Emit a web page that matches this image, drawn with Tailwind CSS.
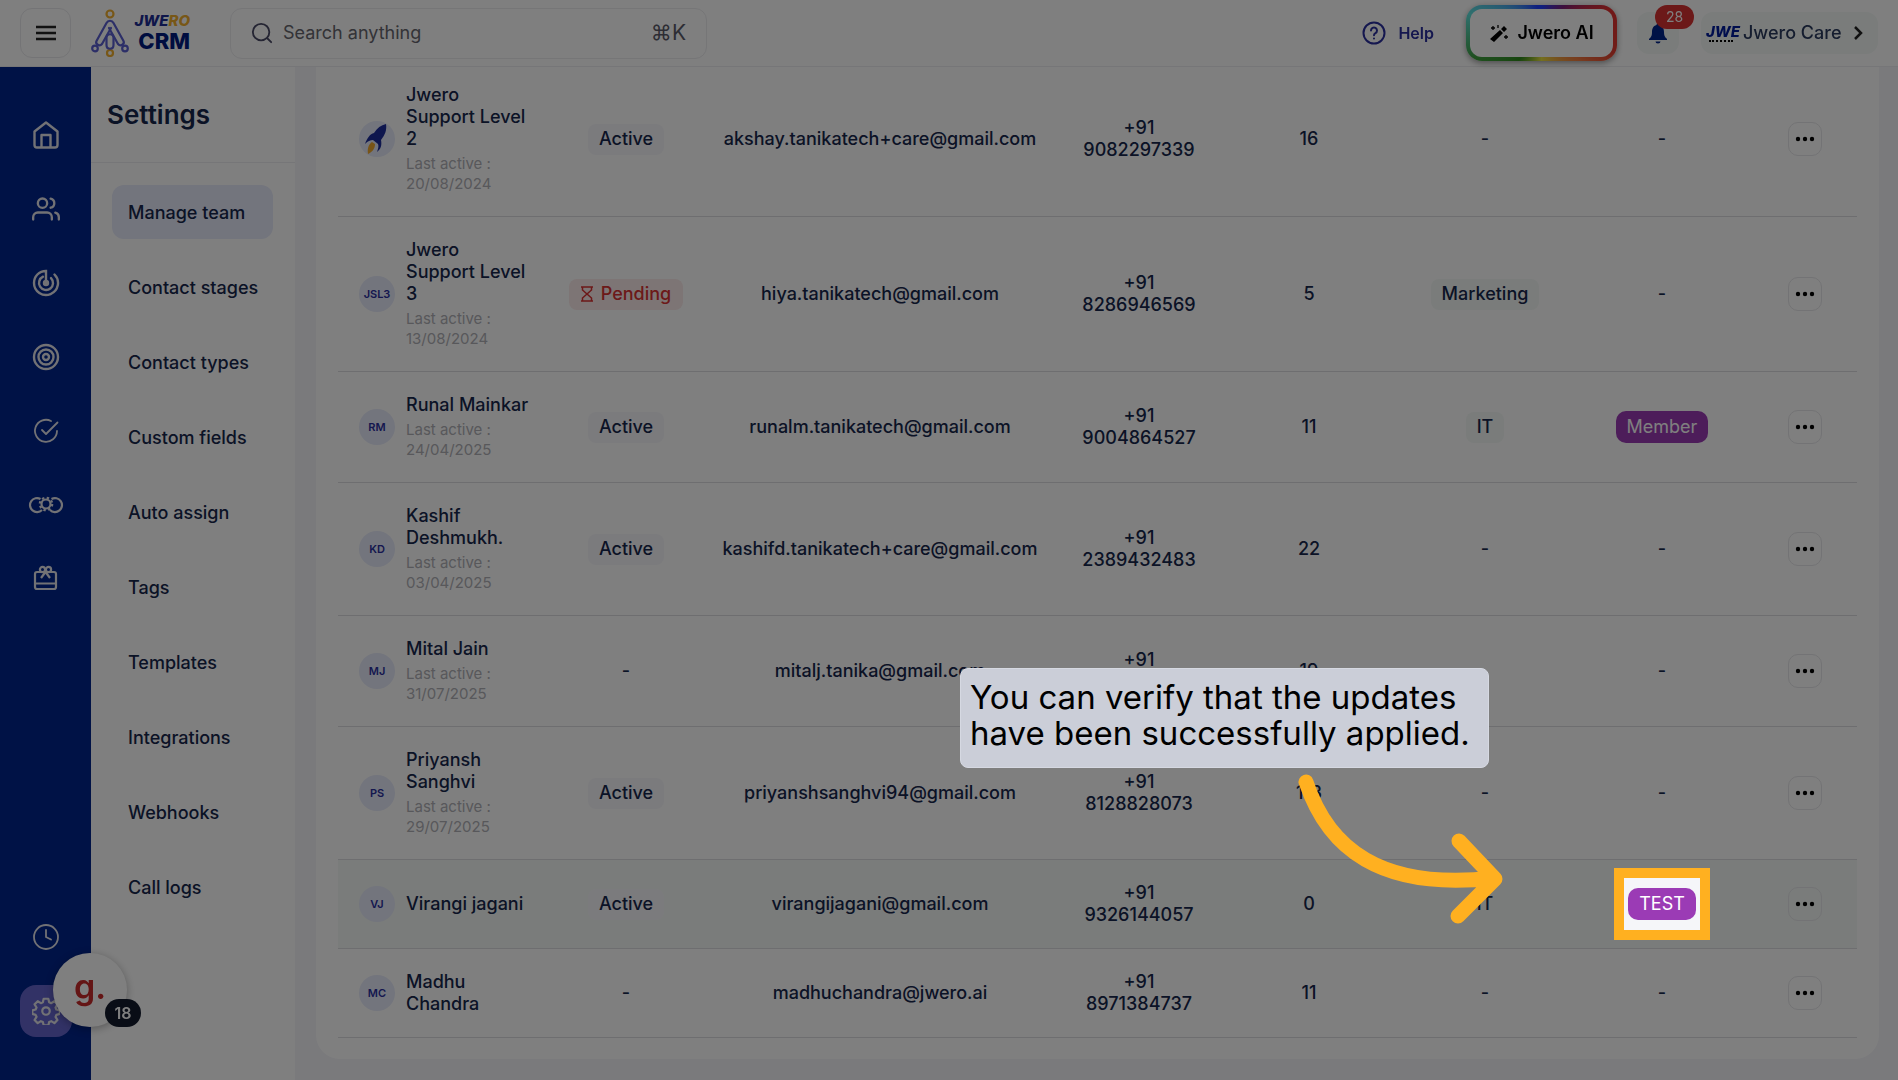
<!DOCTYPE html>
<html lang="en">
<head>
    <meta charset="UTF-8">
    <meta name="viewport" content="width=device-width, initial-scale=1.0">
    <title>Jwero CRM - Settings</title>
    <script src="https://cdn.jsdelivr.net/npm/@tailwindcss/browser@4"></script>
</head>
<body class="min-h-screen overflow-hidden bg-[#f4f4f9] font-['Inter',sans-serif] text-[#16264c]">

    <!-- Header -->
    <header class="fixed inset-x-0 top-0 z-10 flex h-[67px] items-center border-b border-[#ededf0] bg-white pl-5 pr-5">
        <button aria-label="Menu" class="flex h-[50px] w-[51px] items-center justify-center rounded-xl border border-[#e9e9ec]">
            <svg class="size-6" viewBox="0 0 24 24" fill="none" stroke="#222" stroke-width="2.5"><path d="M2 6h20M2 12h20M2 18h20"/></svg>
        </button>

        <a href="#" class="ml-5 flex w-[99px] items-center justify-between">
            <svg class="h-12 w-[38px]" viewBox="0 0 38 48" fill="none" stroke-width="2.2">
                <g stroke="#f0ae2e"><circle cx="19" cy="5" r="3.5"/><circle cx="19" cy="44" r="3"/></g>
                <g stroke="#5a5fd0" stroke-linejoin="round" stroke-linecap="round">
                    <circle cx="4" cy="39.500" r="2.800"/><circle cx="34" cy="39.500" r="2.800"/>
                    <path d="M15.500 14 5.500 32c-1.500 3 3 6 5.500 3l9-16M22.500 14l10 18c1.500 3-3 6-5.500 3l-9-16M15.500 14c1.500-3 5.500-3 7 0"/>
                    <path d="M15.500 29c0-5 7-5 7 0v7c0 5-7 5-7 0z"/>
                </g>
            </svg>
            <span class="flex flex-col items-end font-extrabold">
                <span class="text-[15px] leading-4 italic text-[#1c2c94]">JWE<span class="text-[#f0ae2e]">RO</span></span>
                <span class="text-[22px] leading-6 text-[#001a80]">CRM</span>
            </span>
        </a>

        <label class="ml-10 flex h-[51px] w-[477px] items-center rounded-xl border border-[#ececef] px-5">
            <svg class="size-[22px]" viewBox="0 0 24 24" fill="none" stroke="#4a4a66" stroke-width="2" stroke-linecap="round"><circle cx="11" cy="11" r="9"/><path d="m18 18 4 4"/></svg>
            <input type="text" aria-label="Search anything" placeholder="Search anything" class="ml-[10px] min-w-0 flex-1 text-lg outline-none placeholder:text-[#66666e]">
            <span class="text-[21px] text-[#5a5a68]">⌘K</span>
        </label>

        <div class="ml-auto flex items-center">
            <a href="#" class="flex items-center gap-3 text-base font-semibold text-[#2a2f9e]">
                <svg class="size-6" viewBox="0 0 24 24" fill="none" stroke="#2a2f9e" stroke-width="2" stroke-linecap="round"><circle cx="12" cy="12" r="10.500"/><path d="M9 9.500a3 3 0 1 1 4.500 2.600Q12 13 12 14.200M12 17.500v.1"/></svg>
                Help
            </a>
            <div class="ml-8 rounded-2xl bg-[conic-gradient(#1f3fff,#7a1f7a_40deg,#e03030_70deg,#e03c30_105deg,#f07a40_125deg,#e8e040_180deg,#2f8a1c_220deg,#3f9f3f_250deg,#5fe0dc_285deg,#1f3fff_350deg)] p-1 shadow-[0_2px_6px_rgba(0,0,0,0.4)]">
                <button class="flex h-12 w-[143px] items-center justify-center gap-2 rounded-xl bg-white text-lg font-semibold text-black">
                    <svg class="size-5" viewBox="0 0 20 20"><path d="M1 16 11 7l3 3-9 9zM12 6l3-3 3 3-3 3z" fill="#000"/><path d="M4 3v4M2 5h4M9 2v3M17 12v4M15 14h4" stroke="#000" stroke-width="1.300"/></svg>
                    Jwero AI
                </button>
            </div>
            <button aria-label="Notifications" class="relative ml-5 flex size-[42px] items-center justify-center rounded-xl bg-[#f4f9f6]">
                <svg class="size-6" viewBox="0 0 24 24" fill="#00248c"><path d="M12 2a2 2 0 0 1 1.500 2C17 5 18 8 18 11c0 4 1 5 3 7v1H3v-1c2-2 3-3 3-7 0-3 1-6 4.500-7A2 2 0 0 1 12 2zM9.500 20.500h5a2.500 2 0 0 1-5 0z"/></svg>
                <span class="absolute -top-[7px] left-[18px] flex h-6 w-[39px] items-center justify-center rounded-full bg-[#d93232] text-sm text-white">28</span>
            </button>
            <button class="ml-[22px] flex h-[42px] w-[177px] items-center rounded-xl bg-[#f4f9f6] pl-1 text-lg font-medium text-[#2a3a5e]">
                <span class="flex w-9 flex-col justify-center">
                    <span class="text-[15px] leading-4 font-extrabold italic text-[#001a9c]">JWE</span>
                    <span class="ml-1 w-6 border-b-2 border-dotted border-black"></span>
                </span>
                <span class="ml-[2px] whitespace-nowrap">Jwero Care</span>
                <svg class="ml-auto mr-[10px] size-5" viewBox="0 0 20 20" fill="none" stroke="#222" stroke-width="2.500"><path d="m7 4 6 6-6 6"/></svg>
            </button>
        </div>
    </header>

    <div class="flex min-h-screen">

        <!-- Icon Sidebar -->
        <nav class="flex w-[91px] shrink-0 flex-col items-center justify-between bg-[#00248c] pt-[109px] pb-[43px] text-[#e4e4ea]">
            <div class="flex flex-col gap-[22px]">
                <a href="#" aria-label="Home" class="flex size-[52px] items-center justify-center">
                    <svg class="size-7" viewBox="0 0 28 28" fill="none" stroke="currentColor" stroke-width="2.400" stroke-linejoin="round"><path d="M2.500 10.500 14 1.500l11.500 9V24a2.500 2.500 0 0 1-2.500 2.500H5A2.500 2.500 0 0 1 2.500 24zM9.500 26V14h9v12"/></svg>
                </a>
                <a href="#" aria-label="Contacts" class="flex size-[52px] items-center justify-center">
                    <svg class="size-7" viewBox="0 0 24 24" fill="none" stroke="currentColor" stroke-width="2" stroke-linecap="round"><circle cx="9" cy="7" r="4"/><path d="M1 21v-2a4 4 0 0 1 4-4h8a4 4 0 0 1 4 4v2M16 3.100a4 4 0 0 1 0 7.800M23 21v-2a4 4 0 0 0-3-3.900"/></svg>
                </a>
                <a href="#" aria-label="Leads" class="flex size-[52px] items-center justify-center">
                    <svg class="size-7" viewBox="0 0 28 28" fill="none" stroke="currentColor" stroke-width="2.400" stroke-linecap="round"><path d="M14 14V2C7 2 2 7.400 2 14a12 12 0 1 0 20.500-8.500"/><path d="M11 7.700a7 7 0 1 0 8 1.400"/><circle cx="14" cy="14" r="2"/></svg>
                </a>
                <a href="#" aria-label="Targets" class="flex size-[52px] items-center justify-center">
                    <svg class="size-7" viewBox="0 0 28 28" fill="none" stroke="currentColor" stroke-width="2.400"><circle cx="14" cy="14" r="12"/><circle cx="14" cy="14" r="7.500"/><circle cx="14" cy="14" r="3"/></svg>
                </a>
                <a href="#" aria-label="Tasks" class="flex size-[52px] items-center justify-center">
                    <svg class="size-7" viewBox="0 0 28 28" fill="none" stroke="currentColor" stroke-width="1.800" stroke-linecap="round" stroke-linejoin="round"><path d="M19 4a11 11 0 1 0 6 10M10 13l4 4L25.500 5.500"/></svg>
                </a>
                <a href="#" aria-label="Automation" class="flex size-[52px] items-center justify-center">
                    <svg class="h-5 w-9" viewBox="0 0 36 20" fill="none" stroke="currentColor" stroke-width="2.200"><path d="M12.500 4a7 7 0 1 0 1.500 11M23.500 4a7 7 0 1 1-1.500 11"/><circle cx="18" cy="9" r="4.500"/><circle cx="18" cy="9" r="6.200" stroke-dasharray="2.400 2.470"/></svg>
                </a>
                <a href="#" aria-label="Rewards" class="flex size-[52px] items-center justify-center">
                    <svg class="size-7" viewBox="0 0 28 28" fill="none" stroke="currentColor" stroke-width="2.200" stroke-linejoin="round"><rect x="3" y="7" width="21" height="17" rx="2"/><path d="M3 18.500h21M13.500 7 9 13M13.500 7l4.500 6"/><circle cx="10.500" cy="4.500" r="2.600"/><circle cx="16.500" cy="4.500" r="2.600"/></svg>
                </a>
            </div>
            <div class="flex flex-col gap-[22px]">
                <a href="#" aria-label="History" class="flex size-[52px] items-center justify-center">
                    <svg class="size-7" viewBox="0 0 28 28" fill="none" stroke="currentColor" stroke-width="1.800" stroke-linecap="round"><circle cx="14" cy="14" r="12"/><path d="M14 7v7l5 2.500"/></svg>
                </a>
                <a href="#" aria-label="Settings" class="flex size-[52px] items-center justify-center rounded-2xl bg-[#6464cc]">
                    <svg class="size-7" viewBox="0 0 24 24" fill="none" stroke="currentColor" stroke-width="1.900" stroke-linejoin="round"><circle cx="12" cy="12" r="3.200"/><path d="M10 1.500h4l.7 3 1.800.8 2.700-1.700 2.600 2.700-1.600 2.700.7 1.700 3 .8v3l-3 .8-.7 1.700 1.600 2.700-2.600 2.700-2.700-1.700-1.800.8-.7 2.800h-4l-.7-2.800-1.700-.8-2.700 1.700-2.700-2.700 1.700-2.700-.8-1.700-2.800-.8v-3l2.800-.8.8-1.700-1.700-2.700 2.700-2.700 2.700 1.700 1.700-.8z"/></svg>
                </a>
            </div>
        </nav>

        <!-- Settings Menu -->
        <aside class="w-[204px] shrink-0 bg-white pt-[67px]">
            <h1 class="flex h-24 items-center border-b border-[#ededf0] pl-4 text-[26px] font-semibold">Settings</h1>
            <nav class="flex flex-col gap-[21px] pt-[22px] pr-[22px] pl-[21px] text-lg font-medium">
                <a href="#" class="flex h-[54px] items-center rounded-xl bg-[#e6eafa] pt-[2px] pl-4">Manage team</a>
                <a href="#" class="flex h-[54px] items-center pt-[2px] pl-4 whitespace-nowrap">Contact stages</a>
                <a href="#" class="flex h-[54px] items-center pt-[2px] pl-4">Contact types</a>
                <a href="#" class="flex h-[54px] items-center pt-[2px] pl-4">Custom fields</a>
                <a href="#" class="flex h-[54px] items-center pt-[2px] pl-4">Auto assign</a>
                <a href="#" class="flex h-[54px] items-center pt-[2px] pl-4">Tags</a>
                <a href="#" class="flex h-[54px] items-center pt-[2px] pl-4">Templates</a>
                <a href="#" class="flex h-[54px] items-center pt-[2px] pl-4">Integrations</a>
                <a href="#" class="flex h-[54px] items-center pt-[2px] pl-4">Webhooks</a>
                <a href="#" class="flex h-[54px] items-center pt-[2px] pl-4">Call logs</a>
            </nav>
        </aside>

        <!-- Team Table -->
        <main class="min-w-0 flex-1 pt-[62px] pr-[19px] pb-5 pl-[21px]">
            <div class="rounded-b-3xl bg-white px-[22px] pb-[21px]">
                <table class="w-full table-fixed text-center text-lg leading-[22px] font-medium">
                    <colgroup>
                        <col class="w-[212px]"><col class="w-[152px]"><col class="w-[356px]"><col class="w-[162px]">
                        <col class="w-[178px]"><col class="w-[174px]"><col class="w-[180px]"><col class="w-[105px]">
                    </colgroup>
                    <tbody id="team-rows"></tbody>
                </table>
            </div>
        </main>
    </div>

    <!-- Chat Widget -->
    <div class="fixed bottom-[53px] left-[53px] z-20">
        <button class="flex size-[74px] items-center justify-center rounded-full bg-white pb-2 text-[34px] font-semibold text-[#c82a2a] shadow-[0_2px_8px_rgba(0,0,0,0.3)]">g.</button>
        <span class="absolute right-[-14px] bottom-0 flex h-7 w-9 items-center justify-center rounded-full bg-[#121a2c] text-base font-semibold text-white">18</span>
    </div>

    <!-- Tour Overlay -->
    <div class="fixed inset-0 z-30 bg-black/50"></div>
    <div class="absolute top-[668px] left-[960px] z-40 w-[529px] rounded-lg border border-[#d6d9e2] bg-[#cbced8] px-[9px] pt-[10px] pb-4 text-[33px] leading-9 text-black">
        You can verify that the updates have been successfully applied.
    </div>
    <svg class="absolute top-[770px] left-[1290px] z-40 h-[160px] w-[220px]" viewBox="1290 770 220 160" fill="none" stroke="#ffb020" stroke-width="15" stroke-linecap="round" stroke-linejoin="round">
        <path d="M1306 782C1328 848 1380 891 1494 878M1459 841l36 38-37 37"/>
    </svg>

    <script>
        const team = [
            { name: "Jwero Support Level 2", initials: "", last: "20/08/2024", status: "Active", email: "akshay.tanikatech+care@gmail.com", phone: "9082297339", count: "16", dept: "-", role: "-" },
            { name: "Jwero Support Level 3", initials: "JSL3", last: "13/08/2024", status: "Pending", email: "hiya.tanikatech@gmail.com", phone: "8286946569", count: "5", dept: "Marketing", role: "-" },
            { name: "Runal Mainkar", initials: "RM", last: "24/04/2025", status: "Active", email: "runalm.tanikatech@gmail.com", phone: "9004864527", count: "11", dept: "IT", role: "Member" },
            { name: "Kashif Deshmukh.", initials: "KD", last: "03/04/2025", status: "Active", email: "kashifd.tanikatech+care@gmail.com", phone: "2389432483", count: "22", dept: "-", role: "-" },
            { name: "Mital Jain", initials: "MJ", last: "31/07/2025", status: "-", email: "mitalj.tanika@gmail.com", phone: "", count: "19", dept: "", role: "-" },
            { name: "Priyansh Sanghvi", initials: "PS", last: "29/07/2025", status: "Active", email: "priyanshsanghvi94@gmail.com", phone: "8128828073", count: "113", dept: "-", role: "-" },
            { name: "Virangi jagani", initials: "VJ", last: "", status: "Active", email: "virangijagani@gmail.com", phone: "9326144057", count: "0", dept: "IT", role: "TEST", active: true },
            { name: "Madhu Chandra", initials: "MC", last: "", status: "-", email: "madhuchandra@jwero.ai", phone: "8971384737", count: "11", dept: "-", role: "-" }
        ];

        const rocket = `<svg class="size-9" viewBox="0 0 36 36"><path d="M27 3c-5 1-9 4-12 9-4 1-7 5-9 11 3-3 5-4 8-4l5 4c1 2 0 5-1 8 4-3 5-7 4-12 4-5 6-10 5-16z" fill="#1c2c9c"/><path d="M13 21c-3 2-5 6-4 12 4-2 7-5 7-10z" fill="#f0a82c"/></svg>`;
        const hourglass = `<svg class="h-4 w-3" viewBox="0 0 12 16" fill="none" stroke="#d93232" stroke-width="1.500"><path d="M0 1h12M0 15h12M1.500 1v3L6 8l4.500-4V1M1.500 15v-3L6 8l4.500 4v3"/></svg>`;

        function statusCell(status) {
            if (status === "-") return "-";
            if (status === "Pending") {
                return `<span class="inline-flex h-[31px] items-center gap-2 rounded-lg bg-[#fbeaea] px-3 text-[#d93232]">${hourglass}Pending</span>`;
            }
            return `<span class="inline-flex h-[31px] items-center rounded-lg bg-[#f7f7fb] px-[11px]">${status}</span>`;
        }

        function roleCell(role) {
            if (role === "-") return "-";
            const badge = `<span class="inline-flex h-8 items-center rounded-[10px] bg-[#9b3bb5] px-[11px] font-normal text-white">${role}</span>`;
            if (role !== "TEST") return badge;
            // highlighted by the tour step, sits above the dark overlay
            return `<span class="relative z-40 -my-5 inline-flex h-[72px] w-[96px] items-center justify-center border-10 border-[#ffb020] bg-[#f5f6f9] align-middle">${badge}</span>`;
        }

        document.getElementById("team-rows").innerHTML = team.map(member => `
            <tr class="h-[89px] border-b border-[#dcdce0] ${member.active ? "bg-[#f4f9f6]" : ""}">
                <td class="py-[22px] pr-[19px] pl-[21px] text-left">
                    <div class="flex items-center gap-[11px]">
                        <span class="flex size-9 shrink-0 items-center justify-center rounded-full bg-[#e6eafa] text-[11px] font-semibold text-[#2a2f9e]">${member.initials || rocket}</span>
                        <div>
                            <div>${member.name}</div>
                            ${member.last ? `<div class="mt-1 text-[15px] leading-5 font-normal text-[#b0b0b6]">Last active :<br>${member.last}</div>` : ""}
                        </div>
                    </div>
                </td>
                <td>${statusCell(member.status)}</td>
                <td>${member.email}</td>
                <td>+91<br>${member.phone || "&nbsp;"}</td>
                <td>${member.count}</td>
                <td>${member.dept.length < 2 ? member.dept : `<span class="inline-flex h-[31px] items-center rounded-lg bg-[#f4f9f6] px-[11px]">${member.dept}</span>`}</td>
                <td>${roleCell(member.role)}</td>
                <td>
                    <button aria-label="More" class="inline-flex size-[34px] items-center justify-center rounded-[10px] border border-[#e6e6ea] align-middle">
                        <svg class="size-5" viewBox="0 0 20 20"><circle cx="3" cy="10" r="2.200"/><circle cx="10" cy="10" r="2.200"/><circle cx="17" cy="10" r="2.200"/></svg>
                    </button>
                </td>
            </tr>`).join("");
    </script>

</body>
</html>
